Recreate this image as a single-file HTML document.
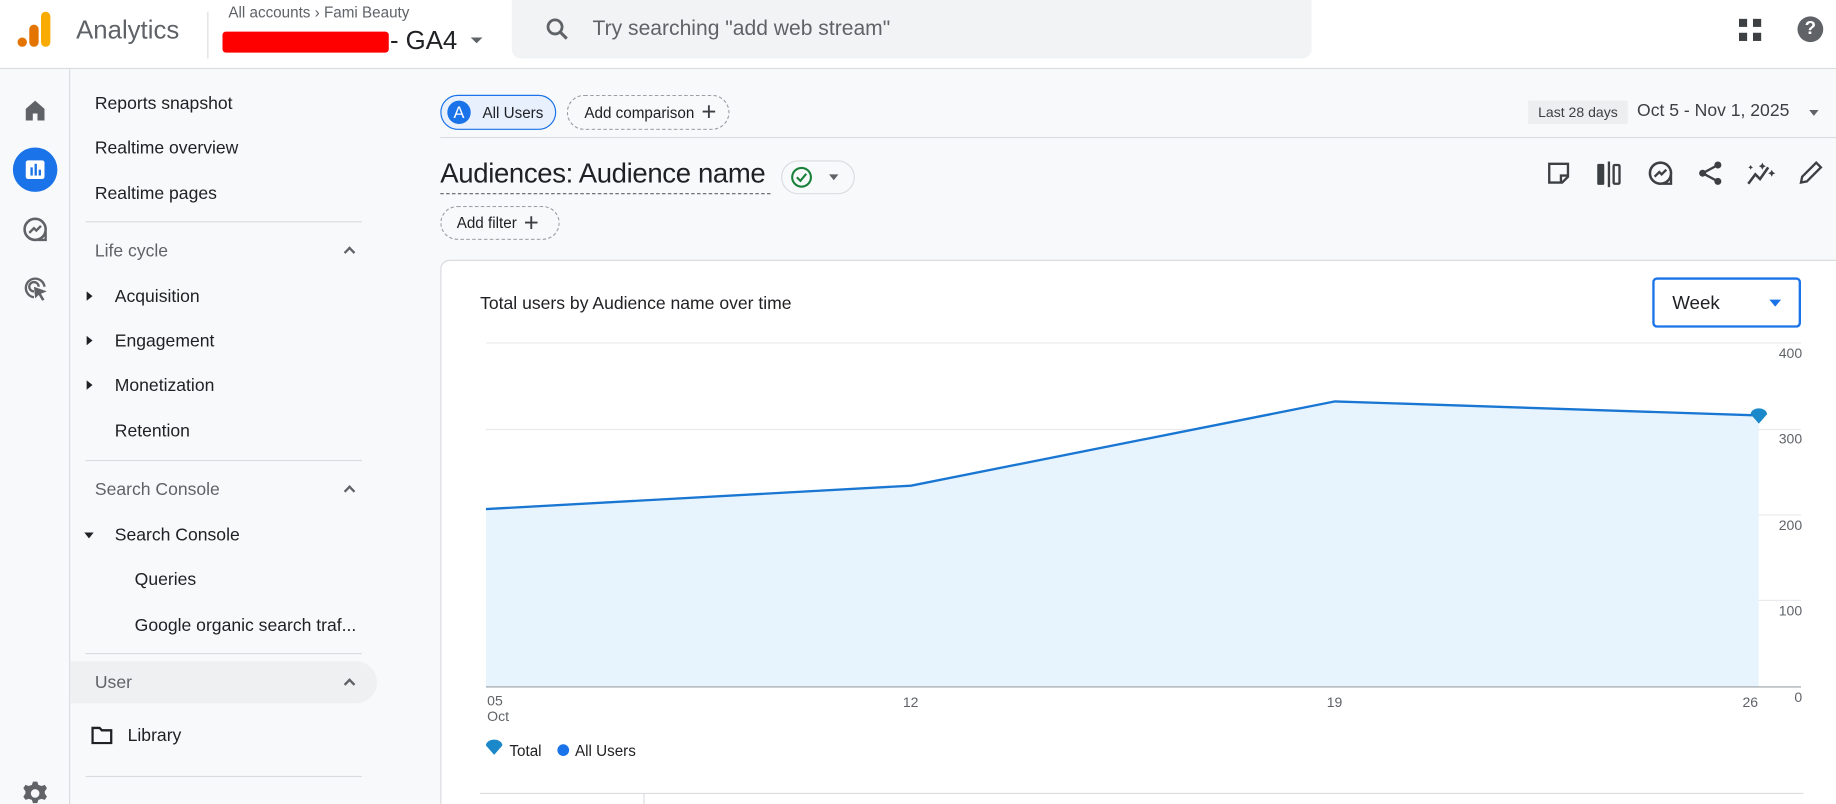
<!DOCTYPE html>
<html><head><meta charset="utf-8"><style>
*{box-sizing:border-box;margin:0;padding:0}
html,body{width:1836px;height:804px;overflow:hidden;background:#fff;font-family:"Liberation Sans",sans-serif;color:#202124}
#w{position:absolute;left:0;top:0;width:1568px;height:687px;transform:scale(1.171,1.1703);transform-origin:0 0;background:#f8f9fa;overflow:hidden}
.a{position:absolute;white-space:nowrap}
.nav{font-size:15px;color:#202124}
.hd{font-size:15px;color:#5f6368}
.chip{position:absolute;border-radius:15px;font-size:13px;display:flex;align-items:center}
.ico{position:absolute}
.yl{position:absolute;font-size:12px;color:#5f6368;text-align:right;width:30px}
.xl{position:absolute;font-size:12px;color:#5f6368}
.chev{position:absolute;width:7px;height:7px;border-left:2px solid #5f6368;border-top:2px solid #5f6368;transform:rotate(45deg)}
</style></head><body><div id="w">
<div class="a" style="left:0;top:0;width:1568px;height:59px;background:#fff;border-bottom:1px solid #dadce0"></div>
<svg class="ico" style="left:14px;top:9px" width="32" height="32" viewBox="0 0 32 32"><rect x="21" y="1" width="8" height="30" rx="4" fill="#f9ab00"/><rect x="11" y="12" width="8" height="19" rx="4" fill="#e37400"/><circle cx="5" cy="27" r="4" fill="#e37400"/></svg>
<div class="a" style="left:65px;top:13px;font-size:22px;color:#5f6368">Analytics</div>
<div class="a" style="left:177px;top:10px;width:1px;height:40px;background:#dadce0"></div>
<div class="a" style="left:195px;top:3px;font-size:13px;color:#5f6368">All accounts › Fami Beauty</div>
<div class="a" style="left:190px;top:27px;width:142px;height:18px;background:#f00;border-radius:3px"></div>
<div class="a" style="left:333px;top:22px;font-size:22px;color:#202124">- GA4</div>
<div class="a" style="left:402px;top:32px;border:5px solid transparent;border-top-color:#5f6368"></div>
<div class="a" style="left:437px;top:0;width:683px;height:50px;background:#f1f3f4;border-radius:0 0 8px 8px"></div>
<svg class="ico" style="left:464px;top:13px" width="24" height="24" viewBox="0 0 24 24"><circle cx="10" cy="10" r="6" fill="none" stroke="#5f6368" stroke-width="2.4"/><path d="M14.5 14.5L20 20" stroke="#5f6368" stroke-width="2.6"/></svg>
<div class="a" style="left:506px;top:14px;font-size:18px;color:#5f6368">Try searching "add web stream"</div>
<svg class="ico" style="left:1485px;top:16px" width="20" height="20"><rect x="0" y="0" width="7" height="7" fill="#3c4043"/><rect x="12" y="0" width="7" height="7" fill="#3c4043"/><rect x="0" y="12" width="7" height="7" fill="#3c4043"/><rect x="12" y="12" width="7" height="7" fill="#3c4043"/></svg>
<div class="a" style="left:1535px;top:14px;width:22px;height:22px;border-radius:50%;background:#5f6368;color:#fff;font-size:16px;font-weight:bold;text-align:center;line-height:22px">?</div>
<div class="a" style="left:59px;top:59px;width:1px;height:628px;background:#dadce0"></div>
<svg class="ico" style="left:20px;top:84px" width="20" height="20" viewBox="0 0 20 20"><path d="M2 9L10 2L18 9V19H12V13H8V19H2Z" fill="#5f6368"/></svg>
<div class="a" style="left:11px;top:126px;width:38px;height:38px;border-radius:50%;background:#1a73e8"></div>
<svg class="ico" style="left:21px;top:136px" width="18" height="18"><rect x="1" y="1" width="16" height="16" rx="2" fill="#fff"/><rect x="5" y="7" width="2" height="7" fill="#1a73e8"/><rect x="8.5" y="4" width="2" height="10" fill="#1a73e8"/><rect x="12" y="9" width="2" height="5" fill="#1a73e8"/></svg>
<svg class="ico" style="left:19px;top:185px" width="22" height="22" viewBox="0 0 22 22"><circle cx="11" cy="11" r="9" fill="none" stroke="#5f6368" stroke-width="2.2"/><path d="M6 14L10 10L12 12L16 8" fill="none" stroke="#5f6368" stroke-width="2"/><path d="M13 20L20 20L20 13" fill="none" stroke="#5f6368" stroke-width="2"/></svg>
<svg class="ico" style="left:19px;top:235px" width="24" height="24" viewBox="0 0 24 24"><path d="M10 19A8 8 0 1 1 19 10" fill="none" stroke="#5f6368" stroke-width="2"/><path d="M10 14A4 4 0 1 1 14 10" fill="none" stroke="#5f6368" stroke-width="2"/><path d="M10 10L21 14L16 16L19 21L17 22L14 17L11 20Z" fill="#5f6368"/></svg>
<svg class="ico" style="left:19px;top:667px" width="22" height="22" viewBox="0 0 24 24"><path d="M12 8a4 4 0 1 0 0 8a4 4 0 1 0 0-8M10 1h4l1 3l3 1l3-1l2 3l-2 3v2l2 3l-2 3l-3-1l-3 1l-1 3h-4l-1-3l-3-1l-3 1l-2-3l2-3v-2l-2-3l2-3l3 1l3-1z" fill="#5f6368" fill-rule="evenodd"/></svg>
<div class="a nav" style="left:81px;top:80px">Reports snapshot</div>
<div class="a nav" style="left:81px;top:118px">Realtime overview</div>
<div class="a nav" style="left:81px;top:157px">Realtime pages</div>
<div class="a" style="left:73px;top:189px;width:236px;height:1px;background:#dadce0"></div>
<div class="a hd" style="left:81px;top:206px">Life cycle</div>
<div class="chev" style="left:295px;top:212px"></div>
<div class="a" style="left:74px;top:249px;border:4px solid transparent;border-left:5px solid #202124"></div>
<div class="a nav" style="left:98px;top:245px">Acquisition</div>
<div class="a" style="left:74px;top:287px;border:4px solid transparent;border-left:5px solid #202124"></div>
<div class="a nav" style="left:98px;top:283px">Engagement</div>
<div class="a" style="left:74px;top:325px;border:4px solid transparent;border-left:5px solid #202124"></div>
<div class="a nav" style="left:98px;top:321px">Monetization</div>
<div class="a nav" style="left:98px;top:360px">Retention</div>
<div class="a" style="left:73px;top:393px;width:236px;height:1px;background:#dadce0"></div>
<div class="a hd" style="left:81px;top:410px">Search Console</div>
<div class="chev" style="left:295px;top:416px"></div>
<div class="a" style="left:72px;top:455px;border:4px solid transparent;border-top:5px solid #202124"></div>
<div class="a nav" style="left:98px;top:449px">Search Console</div>
<div class="a nav" style="left:115px;top:487px">Queries</div>
<div class="a nav" style="left:115px;top:526px">Google organic search traf...</div>
<div class="a" style="left:73px;top:558px;width:236px;height:1px;background:#dadce0"></div>
<div class="a" style="left:60px;top:565px;width:262px;height:36px;background:#eef0f2;border-radius:0 18px 18px 0"></div>
<div class="a hd" style="left:81px;top:575px">User</div>
<div class="chev" style="left:295px;top:581px"></div>
<svg class="ico" style="left:78px;top:620px" width="18" height="16"><path d="M1 2H7L9 4H17V15H1Z" fill="none" stroke="#202124" stroke-width="2"/></svg>
<div class="a nav" style="left:109px;top:620px">Library</div>
<div class="a" style="left:73px;top:663px;width:236px;height:1px;background:#dadce0"></div>
<div class="chip" style="left:376px;top:81px;width:99px;height:30px;background:#e8f0fe;border:1px solid #1a73e8"><span style="width:20px;height:20px;border-radius:50%;background:#1a73e8;color:#fff;margin-left:5px;text-align:center;line-height:20px;font-size:14px">A</span><span style="margin-left:10px">All Users</span></div>
<div class="chip" style="left:484px;top:81px;width:139px;height:30px;border:1px dashed #9aa0a6;padding-left:14px">Add comparison<span style="font-size:22px;margin-left:6px;color:#3c4043;font-weight:300">+</span></div>
<div class="a" style="left:1305px;top:86px;width:85px;height:20px;background:#eceef0;font-size:12px;line-height:20px;text-align:center;color:#3c4043">Last 28 days</div>
<div class="a" style="left:1398px;top:86px;font-size:15px;color:#3c4043">Oct 5 - Nov 1, 2025</div>
<div class="a" style="left:1545px;top:94px;border:4px solid transparent;border-top:5px solid #5f6368"></div>
<div class="a" style="left:376px;top:117px;width:1192px;height:1px;background:#dadce0"></div>
<div class="a" style="left:376px;top:135px;font-size:23.5px;letter-spacing:-0.3px;color:#202124">Audiences: Audience name</div>
<div class="a" style="left:376px;top:165px;width:282px;border-top:1px dashed #5f6368"></div>
<div class="chip" style="left:667px;top:137px;width:63px;height:29px;border:1px solid #dadce0"></div>
<svg class="ico" style="left:675px;top:142px" width="19" height="19"><circle cx="9.5" cy="9.5" r="8" fill="none" stroke="#188038" stroke-width="1.8"/><path d="M5.5 9.5L8.5 12.5L13.5 6.5" fill="none" stroke="#188038" stroke-width="1.8"/></svg>
<div class="a" style="left:708px;top:149px;border:4px solid transparent;border-top:5px solid #5f6368"></div>
<svg class="ico" style="left:1321px;top:138px" width="20" height="20"><path d="M2 2H18V13L13 18H2Z" fill="none" stroke="#3c4043" stroke-width="2"/><path d="M12 18V12H18" fill="none" stroke="#3c4043" stroke-width="2"/></svg>
<svg class="ico" style="left:1363px;top:138px" width="24" height="22"><rect x="1" y="2" width="6" height="18" rx="1" fill="#3c4043"/><rect x="10" y="0" width="2" height="22" fill="#3c4043"/><rect x="15" y="3" width="5" height="16" rx="1" fill="none" stroke="#3c4043" stroke-width="2"/></svg>
<svg class="ico" style="left:1407px;top:137px" width="22" height="22" viewBox="0 0 22 22"><circle cx="11" cy="11" r="9" fill="none" stroke="#3c4043" stroke-width="2.2"/><path d="M6 14L10 10L12 12L16 8" fill="none" stroke="#3c4043" stroke-width="2"/><path d="M13 20L20 20L20 13" fill="none" stroke="#3c4043" stroke-width="2"/></svg>
<svg class="ico" style="left:1450px;top:137px" width="22" height="22"><circle cx="17" cy="4" r="3" fill="#3c4043"/><circle cx="4" cy="11" r="3" fill="#3c4043"/><circle cx="17" cy="18" r="3" fill="#3c4043"/><path d="M17 4L4 11L17 18" fill="none" stroke="#3c4043" stroke-width="2"/></svg>
<svg class="ico" style="left:1491px;top:137px" width="26" height="22"><path d="M2 20L8 12L12 16L19 6" fill="none" stroke="#3c4043" stroke-width="2.2"/><path d="M14 2l1 2l2 1l-2 1l-1 2l-1-2l-2-1l2-1zM22 8l1 2l2 1l-2 1l-1 2l-1-2l-2-1l2-1zM4 4l.7 1.3l1.3.7l-1.3.7L4 8l-.7-1.3L2 6l1.3-.7z" fill="#3c4043"/></svg>
<svg class="ico" style="left:1535px;top:137px" width="22" height="22"><path d="M3 19L4 14L16 2L20 6L8 18Z" fill="none" stroke="#3c4043" stroke-width="2"/></svg>
<div class="chip" style="left:376px;top:176px;width:102px;height:29px;border:1px dashed #9aa0a6;padding-left:13px">Add filter<span style="font-size:22px;margin-left:6px;color:#3c4043;font-weight:300">+</span></div>
<div class="a" style="left:376px;top:222px;width:1200px;height:480px;background:#fff;border:1px solid #dadce0;border-radius:8px 0 0 0"></div>
<div class="a" style="left:410px;top:251px;font-size:15px;color:#202124">Total users by Audience name over time</div>
<div class="a" style="left:1411px;top:237px;width:127px;height:43px;border:2px solid #1a73e8;border-radius:4px;font-size:16px;padding:12px 0 0 15px">Week</div>
<div class="a" style="left:1511px;top:256px;border:5px solid transparent;border-top:6px solid #1a73e8"></div>
<svg class="ico" style="left:0;top:0" width="1568" height="687">
<g stroke="#e8eaed" stroke-width="1"><line x1="415" y1="293" x2="1538" y2="293"/><line x1="415" y1="367" x2="1538" y2="367"/><line x1="415" y1="440" x2="1538" y2="440"/><line x1="415" y1="513" x2="1538" y2="513"/></g>
<polygon points="415,435 778,415 1140,343 1502,355 1502,587 415,587" fill="#e8f4fd"/>
<polyline points="415,435 778,415 1140,343 1502,355" fill="none" stroke="#1976d2" stroke-width="2"/>
<line x1="415" y1="587" x2="1538" y2="587" stroke="#9aa0a6"/>
<path d="M1495 354a7 5 0 0 1 14 0L1502 362Z" fill="#1a88c9"/>
<path d="M415 637a7 5 0 0 1 14 0L422 645Z" fill="#1a88c9"/>
<circle cx="481" cy="641" r="5" fill="#1a73e8"/>
<line x1="410" y1="678" x2="1540" y2="678" stroke="#dadce0"/>
<line x1="550" y1="678" x2="550" y2="687" stroke="#dadce0"/>
</svg>
<div class="yl" style="left:1509px;top:295px">400</div>
<div class="yl" style="left:1509px;top:368px">300</div>
<div class="yl" style="left:1509px;top:442px">200</div>
<div class="yl" style="left:1509px;top:515px">100</div>
<div class="yl" style="left:1509px;top:589px">0</div>
<div class="xl" style="left:416px;top:593px;line-height:13px">05<br>Oct</div>
<div class="xl" style="left:771px;top:593px">12</div>
<div class="xl" style="left:1133px;top:593px">19</div>
<div class="xl" style="left:1488px;top:593px">26</div>
<div class="a" style="left:435px;top:634px;font-size:13px">Total</div>
<div class="a" style="left:491px;top:634px;font-size:13px">All Users</div>
</div></body></html>
